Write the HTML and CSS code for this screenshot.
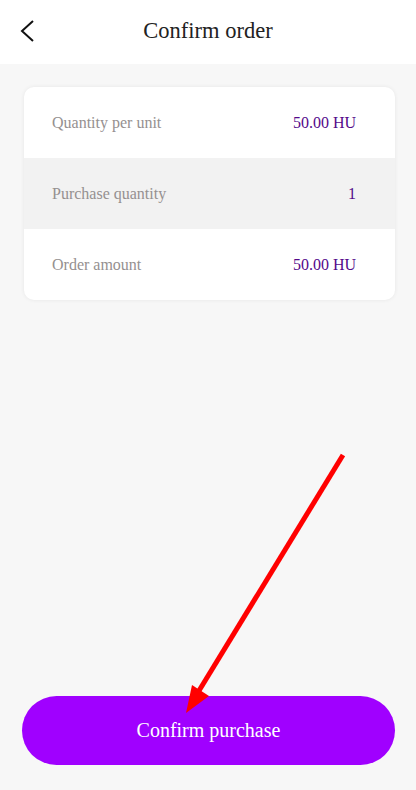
FILE: index.html
```html
<!DOCTYPE html>
<html>
<head>
<meta charset="utf-8">
<link rel="stylesheet" href="styles.css">
</head>
<body>
<div class="app">
  <header class="header">
    <button class="back" aria-label="Back">
      <svg width="20" height="24" viewBox="0 0 20 24"><path d="M14 2 L3 12 L14 22" fill="none" stroke="#111" stroke-width="2"/></svg>
    </button>
    <h1 class="title">Confirm order</h1>
  </header>
  <main class="content">
    <section class="card">
      <div class="row"><span class="label">Quantity per unit</span><span class="value">50.00 HU</span></div>
      <div class="row alt"><span class="label">Purchase quantity</span><span class="value">1</span></div>
      <div class="row"><span class="label">Order amount</span><span class="value">50.00 HU</span></div>
    </section>
    <div class="spacer"></div>
    <button class="confirm">Confirm purchase</button>
  </main>
  <svg class="annotation" width="416" height="790" viewBox="0 0 416 790">
    <line x1="343" y1="455" x2="197" y2="694" stroke="#ff0000" stroke-width="5"/>
    <polygon points="186,713 192,685 209,696" fill="#ff0000"/>
  </svg>
</div>
</body>
</html>
```
FILE: styles.css
```css
* { box-sizing: border-box; }
html, body { margin: 0; padding: 0; }
body {
  font-family: "Liberation Serif", "Times New Roman", serif;
  background: #f7f7f7;
}
.app {
  position: relative;
  width: 416px;
  height: 790px;
  display: flex;
  flex-direction: column;
  overflow: hidden;
}
.header {
  height: 64px;
  background: #fff;
  display: flex;
  align-items: center;
  justify-content: center;
  position: relative;
  flex-shrink: 0;
}
.back {
  position: absolute;
  left: 19px;
  top: 19px;
  border: 0;
  background: none;
  padding: 0;
  width: 20px;
  height: 24px;
  display: flex;
}
.title {
  margin: 0;
  font-weight: normal;
  font-size: 22.5px;
  color: #222;
  line-height: 1;
  margin-top: -2px;
}
.content {
  flex: 1;
  display: flex;
  flex-direction: column;
  padding: 23px 21px 25px 22px;
}
.card {
  margin: 0 0 0 2px;
  background: #fff;
  border-radius: 10px;
  box-shadow: 0 0 4px rgba(0,0,0,0.07);
  overflow: hidden;
}
.row {
  height: 71px;
  display: flex;
  align-items: center;
  justify-content: space-between;
  padding: 0 39px 0 28px;
  font-size: 16px;
}
.row.alt { background: #f2f2f2; }
.label { color: #959090; }
.value { color: #530a8a; }
.spacer { flex: 1; }
.confirm {
  height: 69px;
  border: 0;
  border-radius: 35px;
  background: #a000ff;
  color: #fff;
  font-family: "Liberation Serif", "Times New Roman", serif;
  font-size: 20px;
  cursor: pointer;
}
.annotation {
  position: absolute;
  left: 0;
  top: 0;
  pointer-events: none;
}
```
